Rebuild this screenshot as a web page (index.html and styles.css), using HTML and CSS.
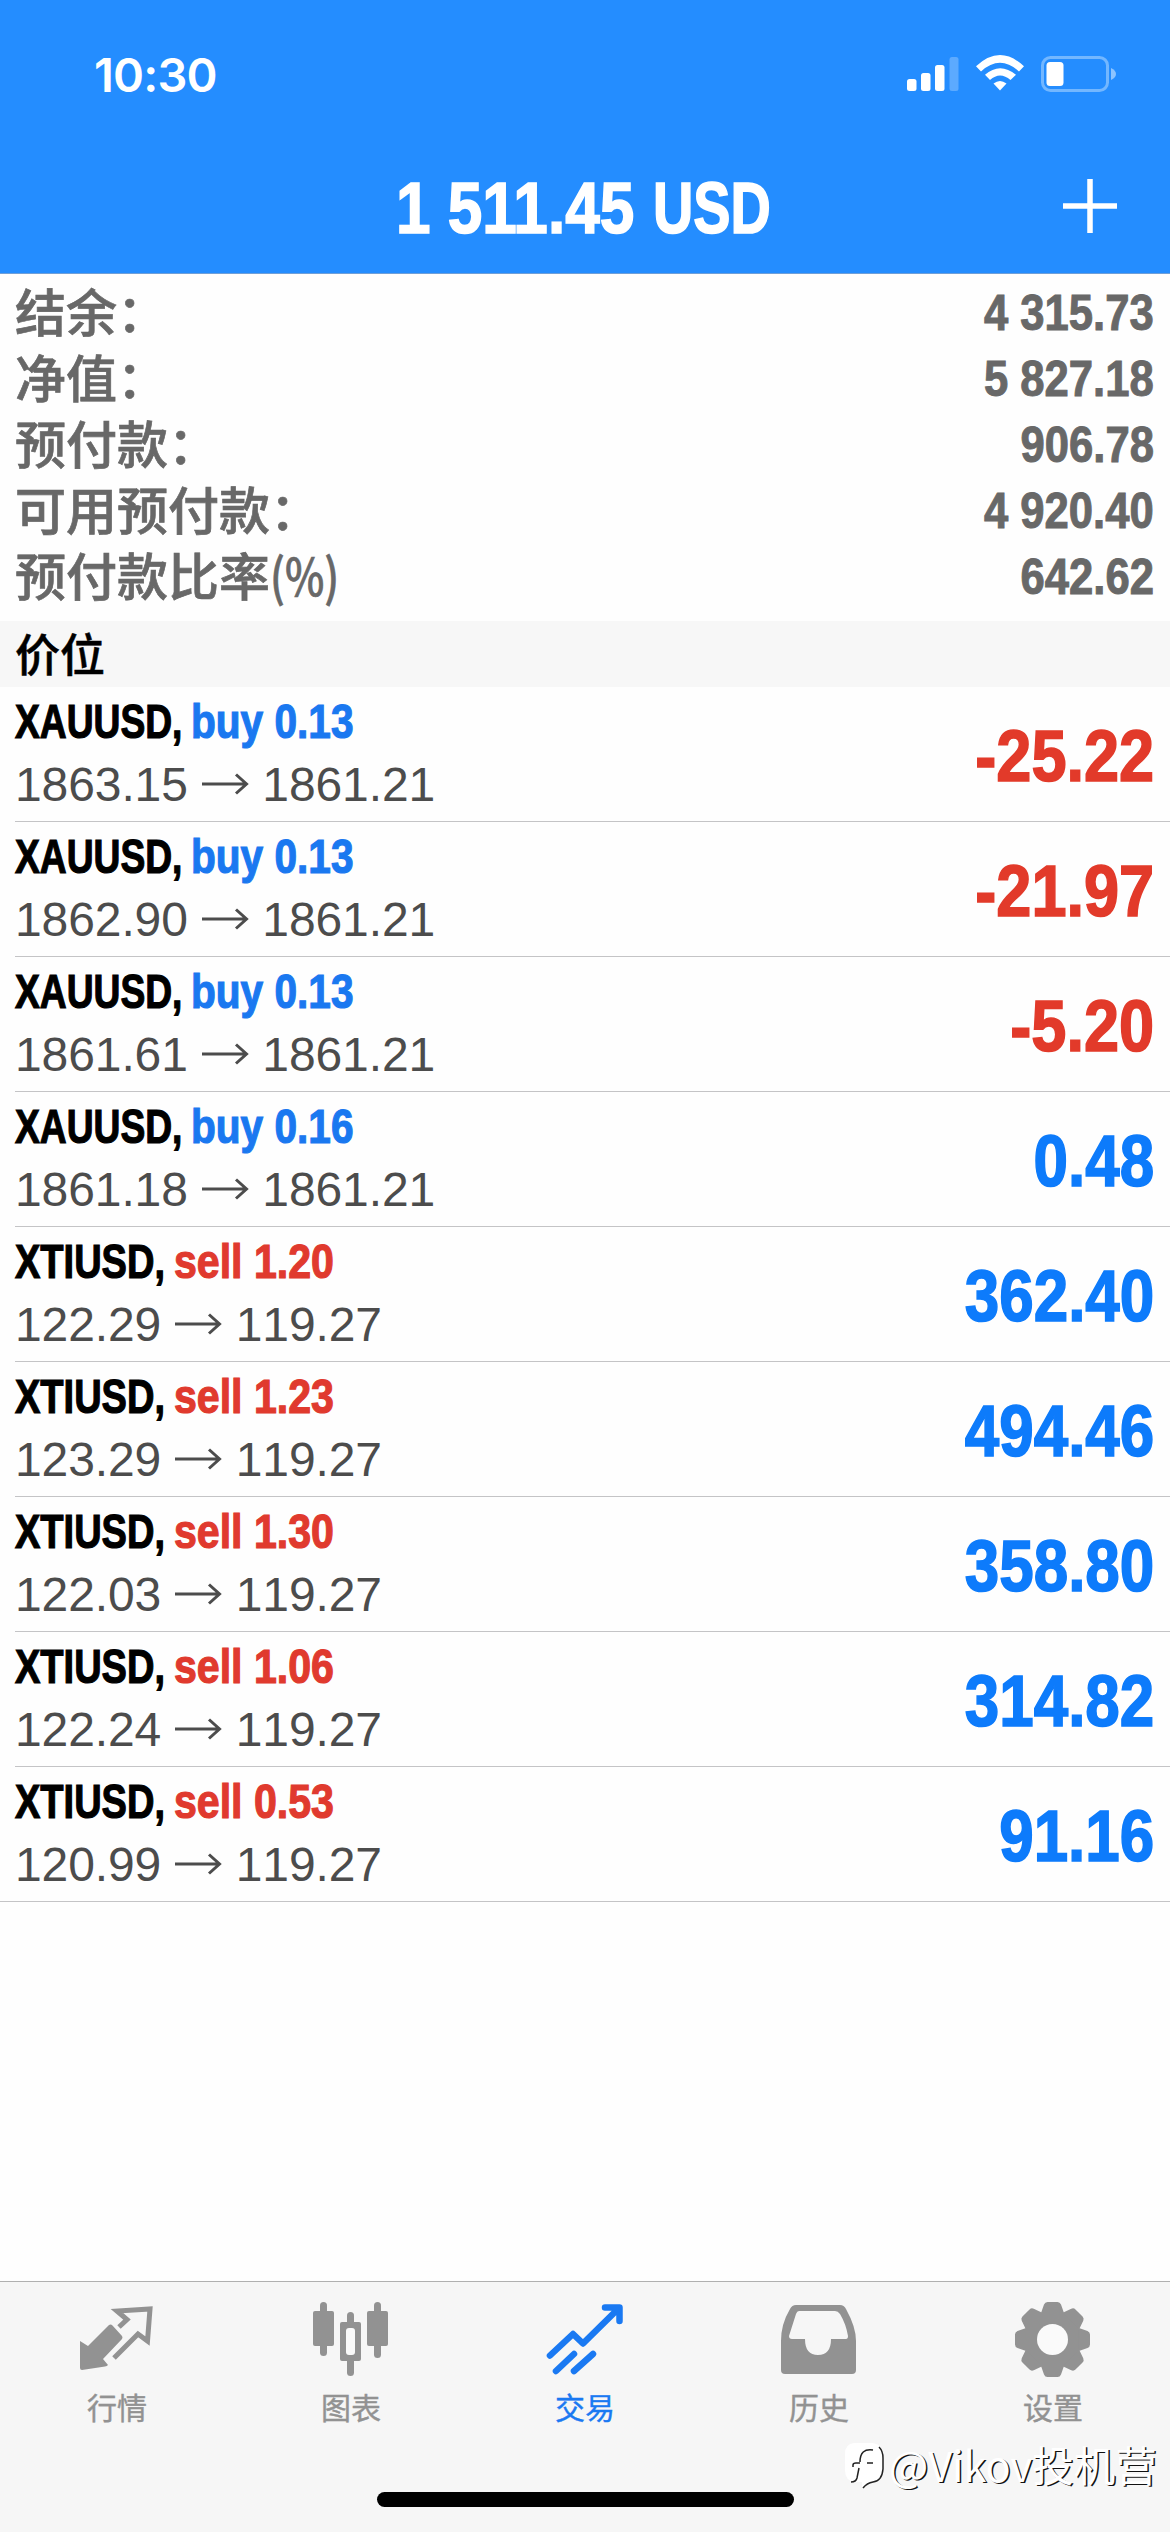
FILE: index.html
```html
<!DOCTYPE html>
<html lang="zh-CN">
<head>
<meta charset="utf-8">
<title>交易</title>
<link rel="stylesheet" href="styles.css">
</head>
<body>
<div class="screen">
  <header class="header">
    <div class="status">
      <span class="clock">10:30</span>
      <svg class="signal" width="52" height="40" viewBox="0 0 52 40">
        <rect x="0" y="25" width="9.5" height="12" rx="2.5"/><rect x="14" y="19" width="9.5" height="18" rx="2.5"/><rect x="28" y="11" width="9.5" height="26" rx="2.5"/><rect class="dim" x="42.5" y="3" width="9" height="34" rx="2.5"/>
      </svg>
      <svg class="wifi" width="48" height="36" viewBox="0 0 48 36">
        <path d="M0 11.3Q24-11.2 48 11.3L43 16.5Q24-.8 5 16.5Z"/><path d="M9 19.8Q24 6.600 40 19.8L34.500 25Q24 16 14 25Z"/><path d="M17.500 28.500Q24 23.500 30.500 28.500L24 35.500Z"/>
      </svg>
      <svg class="battery" width="76" height="36" viewBox="0 0 76 36">
        <rect class="shell" x="1.500" y="1.500" width="65" height="33" rx="8"/><path class="cap" d="M70 12q5 2.500 5 6t-5 6z"/><rect x="5.500" y="6" width="17" height="24" rx="3.500"/>
      </svg>
    </div>
    <div class="titlebar">
      <h1 class="title"><span class="total">1 511.45</span><span class="currency">USD</span></h1>
      <svg class="add" width="54" height="54" viewBox="0 0 54 54"><path d="M27 0V54M0 27H54"/></svg>
    </div>
  </header>

  <dl class="summary">
    <div><dt>结余：</dt><dd>4 315.73</dd></div>
    <div><dt>净值：</dt><dd>5 827.18</dd></div>
    <div><dt>预付款：</dt><dd>906.78</dd></div>
    <div><dt>可用预付款：</dt><dd>4 920.40</dd></div>
    <div><dt>预付款比率<span class="unit">(%)</span></dt><dd>642.62</dd></div>
  </dl>

  <h2 class="section">价位</h2>

  <ul class="positions">
    <li><div class="info"><p class="deal"><b class="gold">XAUUSD,</b><span class="buy">buy 0.13</span></p><p class="price">1863.15 <svg class="arrow" viewBox="0 0 48 24"><path d="M1 12H45M35 2.500L45.500 12L35 21.500"/></svg> 1861.21</p></div><span class="amount loss">-25.22</span></li>
    <li><div class="info"><p class="deal"><b class="gold">XAUUSD,</b><span class="buy">buy 0.13</span></p><p class="price">1862.90 <svg class="arrow" viewBox="0 0 48 24"><path d="M1 12H45M35 2.500L45.500 12L35 21.500"/></svg> 1861.21</p></div><span class="amount loss">-21.97</span></li>
    <li><div class="info"><p class="deal"><b class="gold">XAUUSD,</b><span class="buy">buy 0.13</span></p><p class="price">1861.61 <svg class="arrow" viewBox="0 0 48 24"><path d="M1 12H45M35 2.500L45.500 12L35 21.500"/></svg> 1861.21</p></div><span class="amount loss">-5.20</span></li>
    <li><div class="info"><p class="deal"><b class="gold">XAUUSD,</b><span class="buy">buy 0.16</span></p><p class="price">1861.18 <svg class="arrow" viewBox="0 0 48 24"><path d="M1 12H45M35 2.500L45.500 12L35 21.500"/></svg> 1861.21</p></div><span class="amount">0.48</span></li>
    <li><div class="info"><p class="deal"><b class="oil">XTIUSD,</b><span class="sell">sell 1.20</span></p><p class="price">122.29 <svg class="arrow" viewBox="0 0 48 24"><path d="M1 12H45M35 2.500L45.500 12L35 21.500"/></svg> 119.27</p></div><span class="amount">362.40</span></li>
    <li><div class="info"><p class="deal"><b class="oil">XTIUSD,</b><span class="sell">sell 1.23</span></p><p class="price">123.29 <svg class="arrow" viewBox="0 0 48 24"><path d="M1 12H45M35 2.500L45.500 12L35 21.500"/></svg> 119.27</p></div><span class="amount">494.46</span></li>
    <li><div class="info"><p class="deal"><b class="oil">XTIUSD,</b><span class="sell">sell 1.30</span></p><p class="price">122.03 <svg class="arrow" viewBox="0 0 48 24"><path d="M1 12H45M35 2.500L45.500 12L35 21.500"/></svg> 119.27</p></div><span class="amount">358.80</span></li>
    <li><div class="info"><p class="deal"><b class="oil">XTIUSD,</b><span class="sell">sell 1.06</span></p><p class="price">122.24 <svg class="arrow" viewBox="0 0 48 24"><path d="M1 12H45M35 2.500L45.500 12L35 21.500"/></svg> 119.27</p></div><span class="amount">314.82</span></li>
    <li><div class="info"><p class="deal"><b class="oil">XTIUSD,</b><span class="sell">sell 0.53</span></p><p class="price">120.99 <svg class="arrow" viewBox="0 0 48 24"><path d="M1 12H45M35 2.500L45.500 12L35 21.500"/></svg> 119.27</p></div><span class="amount">91.16</span></li>
  </ul>

  <nav class="tabs">
    <a class="tab"><svg viewBox="0 0 78 78"><path d="M2 35L10 40L31 19Q33 18 34.500 19.500L44 30Q45 31.500 44 33L25 53L30 59Q29 60 27 60.500L4 64Q2 64 2 62Z"/><path class="line" d="M41 21L49 13.500L39 5L72 3L69.500 35L60 28L36 52"/></svg><span>行情</span></a>
    <a class="tab"><svg viewBox="0 0 78 78"><rect x="1" y="5" width="21" height="35" rx="2"/><rect x="8" y="-4" width="7" height="54" rx="3.500"/><rect x="55" y="5" width="21" height="35" rx="2"/><rect x="62" y="-4" width="7" height="56" rx="3.500"/><rect x="35" y="6" width="7" height="64" rx="3.500"/><rect x="28" y="16" width="21" height="39" rx="2"/><rect class="hole" x="34" y="22" width="9" height="27" rx="3"/></svg><span>图表</span></a>
    <a class="tab active"><svg viewBox="0 0 78 78"><path class="line trend" d="M4 49.500L27 28L37 37.500L72 3M59 1.500H73.500V15M10 65L28 48M28 65L47 48"/></svg><span>交易</span></a>
    <a class="tab"><svg viewBox="0 0 78 78"><path fill-rule="evenodd" d="M16 -1H60Q64 -1 66 3Q76 21 76 35V64Q76 68 72 68H5Q1 68 1 64V35Q1 18 10 3Q12-1 16-1ZM19 5Q17 5 16 8L9 30Q9 33 12 33H25Q25 49 38 49Q51 49 51 33H66Q68 33 68 30Q66 18 60 8Q58 5 55 5Z"/></svg><span>历史</span></a>
    <a class="tab"><svg viewBox="0 0 78 78"><g transform="translate(38.500 33.500)"><path id="cog" d="M-12-25L-8.500-35Q-7.500-37.500-5-37.500H5Q7.500-37.500 8.500-35L12-25L25-12V12L12 25H-12L-25 12V-12Z"/><use href="#cog" transform="rotate(45)"/><use href="#cog" transform="rotate(90)"/><use href="#cog" transform="rotate(135)"/><use href="#cog" transform="rotate(180)"/><use href="#cog" transform="rotate(225)"/><use href="#cog" transform="rotate(270)"/><use href="#cog" transform="rotate(315)"/><circle class="hole" r="15.500"/></g></svg><span>设置</span></a>
  </nav>
  <div class="home"></div>
  <div class="watermark"><svg viewBox="0 0 42 48"><path class="bubble" d="M10 1H28Q39 2 39 13V27Q38 38 28 40Q22 42 18 46V40H11Q1 39 1 28V12Q1 2 10 1Z"/><path class="shade" d="M35 5Q39 9 39 16V27Q38 39 29 40Q23 41 19 46"/><path class="mark" d="M29 8Q16 6 16 20M9 25V23Q9 21 12 21H16M15 26L13 36Q12 40 7 40M23 21H29"/></svg><span>@Vikov投机营</span></div>
</div>
</body>
</html>
```
FILE: styles.css
```css
* { box-sizing: border-box; margin: 0; padding: 0; }
body { width: 1170px; background: #fff; font-family: "Liberation Sans", "Noto Sans CJK SC", sans-serif; }
.screen { position: relative; display: flex; flex-direction: column; width: 1170px; height: 2532px; background: #fefefe; overflow: hidden; }

.header { height: 274px; background: #248dff; border-bottom: 1px solid #6f9fd8; color: #fff; }
.status { display: flex; height: 148px; padding: 54px 53px 0 94px; align-items: flex-start; }
.status svg { fill: #fff; }
.clock { flex: 1; font: 600 47px/42px Inter, sans-serif; letter-spacing: -.8px; }
.signal { margin-right: 17px; }
.signal .dim { fill: #5caaff; }
.wifi { margin: 1px 17px 0 0; }
.battery { margin-top: 2px; }
.battery .shell { fill: none; stroke: #73b7ff; stroke-width: 3; }
.battery .cap { fill: #8dc4ff; }
.titlebar { display: flex; height: 118px; justify-content: flex-end; padding: 31px 53px 0 0; }
.title { display: flex; flex: 1; padding-left: 396px; font-size: 72px; line-height: 56px; white-space: nowrap; margin-top: 1px; -webkit-text-stroke: 1.6px currentColor; }
.title span { display: block; transform-origin: left; }
.total { width: 257px; transform: scaleX(.862); }
.currency { width: 116px; transform: scaleX(.775); }
.add path { stroke: #fff; stroke-width: 5.500; fill: none; }

.summary { height: 347px; padding: 6px 16px 0 15px; color: #686868; }
.summary div { display: flex; justify-content: space-between; height: 66px; line-height: 66px; }
.summary dt { font: 500 51px/60px "Noto Sans CJK SC", sans-serif; white-space: nowrap; -webkit-text-stroke: .7px currentColor; }
.unit { display: inline-block; transform: scaleX(.82); transform-origin: left; }
.summary dd { font-weight: 700; font-size: 50px; transform: scaleX(.872); transform-origin: right; -webkit-text-stroke: 1px currentColor; }

.section { height: 66px; padding-left: 15px; background: #f7f7f7; color: #000; font: 500 45px/63px "Noto Sans CJK SC", sans-serif; -webkit-text-stroke: .5px currentColor; }

.positions { list-style: none; }
.positions li { display: flex; justify-content: space-between; height: 135px; margin-left: 15px; padding-right: 16px; border-bottom: 1px solid #c4c4c6; }
.positions li:last-child { margin-left: 0; padding-left: 15px; }
.deal { display: flex; height: 63px; padding-top: 7px; font-size: 48px; line-height: 56px; font-weight: 700; white-space: nowrap; -webkit-text-stroke: 1.2px currentColor; }
.deal b, .deal span { display: block; transform-origin: left; }
.gold { width: 176px; transform: scaleX(.775); }
.oil { width: 159px; transform: scaleX(.792); }
.buy { color: #1a78f0; transform: scaleX(.846); }
.sell { color: #e03a2e; transform: scaleX(.856); }
.price { font-size: 48px; line-height: 56px; padding-top: 7px; color: #4c4c4c; white-space: nowrap; font-kerning: none; letter-spacing: -.1px; }
.arrow { display: inline-block; width: 48px; height: 24px; vertical-align: 5px; fill: none; stroke: #4c4c4c; stroke-width: 3; }
.amount { color: #0d7bfb; font-weight: 700; font-size: 72px; line-height: 138px; transform: scaleX(.86); transform-origin: right; -webkit-text-stroke: 1.6px currentColor; }
.loss { color: #e23a2a; transform: scaleX(.876); }

.tabs { display: grid; grid-template-columns: repeat(5, 1fr); height: 251px; margin-top: auto; padding-top: 24px; background: #f6f6f6; border-top: 1px solid #b0b0b0; }
.tab { display: flex; flex-direction: column; align-items: center; color: #929292; }
.tab svg { width: 78px; height: 78px; fill: currentColor; overflow: visible; }
.tab span { margin-top: 2px; font: 400 30px/40px "Noto Sans CJK SC", sans-serif; -webkit-text-stroke: .4px currentColor; }
.tab .line { fill: none; stroke: currentColor; stroke-width: 5; }
.tab .trend { stroke-width: 6.500; stroke-linecap: round; stroke-linejoin: round; }
.tab .hole { fill: #fafafa; }
.tab.active { color: #1a79f2; }

.home { position: absolute; left: 377px; top: 2492px; width: 417px; height: 15px; border-radius: 8px; background: #000; }
.watermark { position: absolute; left: 844px; top: 2437px; display: flex; align-items: center; color: #fff; font: 400 41.5px/52px "Noto Sans CJK SC", sans-serif; white-space: nowrap; text-shadow: 1.5px 1px 0 #111; }
.watermark svg { width: 42px; height: 48px; margin: 5px 3px 0 0; fill: none; overflow: visible; }
.watermark .bubble { fill: #fff; }
.watermark .shade, .watermark .mark { stroke: #222; stroke-width: 1.500; }
```
